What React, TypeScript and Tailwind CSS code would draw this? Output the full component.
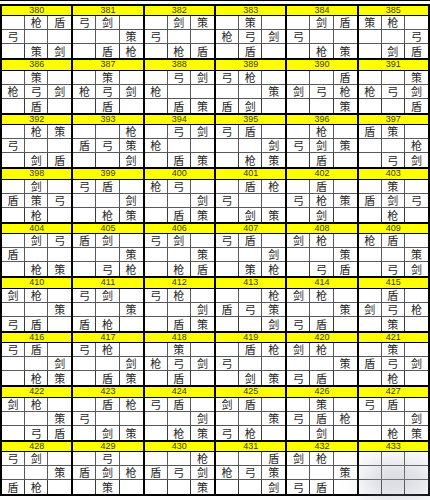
// each puzzle: three rows of three cells, '.' = empty cell
const puzzles: [number, string][] = [
  [380, '.枪盾|弓..|.策剑'],
  [381, '弓剑.|..策|.盾枪'],
  [382, '.剑策|弓..|.枪盾'],
  [383, '.策.|枪弓剑|.盾.'],
  [384, '.剑盾|弓..|.枪策'],
  [385, '策枪.|..弓|.剑盾'],
  [386, '.策.|枪弓剑|.盾.'],
  [387, '.策.|枪弓剑|.盾.'],
  [388, '.弓剑|枪..|.盾策'],
  [389, '弓枪.|..策|盾剑.'],
  [390, '..盾|剑弓枪|..策'],
  [391, '..策|枪弓剑|..盾'],
  [392, '.枪策|弓..|.剑盾'],
  [393, '..枪|盾弓策|..剑'],
  [394, '.弓剑|枪..|.盾策'],
  [395, '弓盾.|..剑|.枪策'],
  [396, '.枪.|弓剑策|.盾.'],
  [397, '盾策.|..枪|.弓剑'],
  [398, '.剑.|盾策弓|.枪.'],
  [399, '弓盾.|..剑|.枪策'],
  [400, '枪弓.|..剑|.盾策'],
  [401, '.盾枪|弓..|.剑策'],
  [402, '.盾.|弓枪策|.剑.'],
  [403, '.策.|盾剑弓|.枪.'],
  [404, '.剑弓|盾..|.枪策'],
  [405, '盾剑.|..策|.弓枪'],
  [406, '弓剑.|..策|.枪盾'],
  [407, '弓盾.|..剑|.策枪'],
  [408, '剑枪.|..策|.弓盾'],
  [409, '枪盾.|..策|.弓剑'],
  [410, '剑枪.|..策|弓盾.'],
  [411, '弓剑.|..策|盾枪.'],
  [412, '弓枪.|..剑|.盾策'],
  [413, '..枪|盾弓策|..剑'],
  [414, '剑枪.|..策|弓盾.'],
  [415, '.盾.|剑弓枪|.策.'],
  [416, '弓盾.|..剑|.枪策'],
  [417, '弓枪.|..剑|.盾策'],
  [418, '.策.|枪弓剑|.盾.'],
  [419, '.盾枪|弓..|.剑策'],
  [420, '剑枪.|..策|弓盾.'],
  [421, '.策.|盾弓剑|.枪.'],
  [422, '剑枪.|..策|.弓盾'],
  [423, '.盾枪|弓..|.剑策'],
  [424, '弓盾.|..剑|.枪策'],
  [425, '剑盾.|..策|弓枪.'],
  [426, '.策.|弓盾枪|.剑.'],
  [427, '弓盾.|..剑|.枪策'],
  [428, '弓剑.|..策|盾枪.'],
  [429, '.弓.|盾剑枪|.策.'],
  [430, '..枪|盾弓剑|..策'],
  [431, '..盾|枪弓策|..剑'],
  [432, '剑枪.|..策|弓盾.'],
  [433, '...|...|...'],
];

function Block({ num, layout }: { num: number; layout: string }) {
  const cells = layout.split('|').flatMap((row) => Array.from(row));
  return (
    <div className="border-r-2 border-b-2 border-black">
      <div className="h-[10.5px] bg-[#ffff00] border-b border-black text-center text-[9px] leading-[9.5px] text-[#3a3a10] font-['Liberation_Sans',sans-serif]">
        {num}
      </div>
      <div className="grid grid-cols-3 grid-rows-[14px_14px_14px]">
        {cells.map((c, i) => (
          <div
            key={i}
            className={
              'flex items-end justify-center text-[11px] leading-[13px] text-[#1e1e1e] ' +
              (i % 3 < 2 ? 'border-r border-[#3a3a3a] ' : '') +
              (i < 6 ? 'border-b border-[#5a5a5a]' : '')
            }
          >
            {c === '.' ? '' : c}
          </div>
        ))}
      </div>
    </div>
  );
}

export default function App() {
  return (
    <div className="relative w-[430px] h-[500px] overflow-hidden bg-white font-['Noto_Sans_CJK_SC',sans-serif]">
      <div className="h-px bg-black" />
      <div className="mt-[2.5px] grid grid-cols-6 border-t-2 border-l-2 border-black">
        {puzzles.map(([n, l]) => (
          <Block key={n} num={n} layout={l} />
        ))}
      </div>
      {/* watermark smudge */}
      <div className="absolute left-[362px] top-[462px] w-[70px] h-[36px] rounded-full bg-gray-400/40 blur-md" />
    </div>
  );
}
